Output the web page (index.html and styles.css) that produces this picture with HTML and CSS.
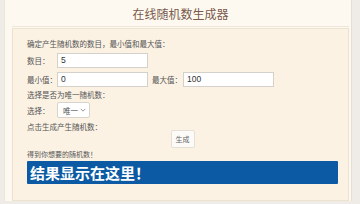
FILE: index.html
```html
<!DOCTYPE html>
<html lang="zh-CN">
<head>
<meta charset="utf-8">
<title>在线随机数生成器</title>
<link rel="stylesheet" href="styles.css">
</head>
<body>
<div class="page">
  <div class="frame">
    <h1 class="title">在线随机数生成器</h1>
    <div class="panel">
      <p class="text">确定产生随机数的数目，最小值和最大值：</p>
      <div class="row">
        <span class="label">数目：</span>
        <input class="field" type="text" value="5">
      </div>
      <div class="row row-gap">
        <span class="label">最小值：</span>
        <input class="field" type="text" value="0">
        <span class="label label-max">最大值：</span>
        <input class="field" type="text" value="100">
      </div>
      <p class="text">选择是否为唯一随机数：</p>
      <div class="row row-select">
        <span class="label">选择：</span>
        <span class="select">唯一<svg class="chev" viewBox="0 0 8 5" width="6" height="4"><path d="M1 1l3 3 3-3" fill="none" stroke="#777" stroke-width="1"/></svg></span>
      </div>
      <p class="text text-tight">点击生成产生随机数：</p>
      <div class="btn-row"><button class="btn">生成</button></div>
      <p class="text small">得到你想要的随机数！</p>
      <div class="result">结果显示在这里！</div>
    </div>
  </div>
</div>
</body>
</html>
```
FILE: styles.css
```css
* { box-sizing: border-box; }
html, body { margin: 0; padding: 0; }
body {
  width: 360px;
  height: 204px;
  overflow: hidden;
  background: #efece7;
  font-family: "Liberation Sans", "Noto Sans CJK SC", sans-serif;
}
.page {
  height: 204px;
  padding-left: 4px;
  padding-right: 8px;
}
.frame {
  height: 201px;
  background: #fdf9f1;
  border-left: 1px solid #ebe6dc;
  border-right: 1px solid #e4dfd6;
  padding: 0 2px 0 7px;
  display: flex;
  flex-direction: column;
}
.title {
  margin: 0;
  height: 27px;
  line-height: 27px;
  text-align: center;
  font-size: 12px;
  font-weight: normal;
  color: #7a5a4b;
  font-family: "Noto Sans CJK SC", sans-serif;
  border-bottom: 1px solid #eee6d8;
}
.panel {
  flex: 1;
  margin-top: 1px;
  background: #fbf2e4;
  border: 1px solid #ede2cf;
  padding: 8px 10px 0 14px;
  color: #555;
  font-size: 7.5px;
}
.text {
  margin: 0;
  height: 14px;
  line-height: 14px;
  font-family: "Noto Sans CJK SC", sans-serif;
}
.text-tight {
  margin-top: 4px;
  height: 10px;
  line-height: 10px;
}
.small { font-size: 7px; height: 12px; line-height: 12px; }
.row {
  display: flex;
  align-items: center;
  height: 18px;
}
.row-gap { margin-top: 1px; }
.row-select { height: 16px; margin-top: 0; }
.label {
  width: 30px;
  font-family: "Noto Sans CJK SC", sans-serif;
}
.label-max { width: 31px; margin-left: 4px; }
.field {
  width: 91px;
  height: 15px;
  border: 1px solid #d4d0ca;
  background: #fff;
  font-family: "Liberation Sans", sans-serif;
  font-size: 8.5px;
  color: #333;
  padding: 0 3px;
  margin: 0;
  outline: none;
}
.select {
  width: 33px;
  height: 16px;
  border: 1px solid #d8d4cd;
  background: #fff;
  border-radius: 2px;
  display: flex;
  align-items: center;
  justify-content: space-between;
  padding: 0 3px 0 5px;
  font-family: "Noto Sans CJK SC", sans-serif;
  color: #555;
}
.btn-row {
  display: flex;
  justify-content: center;
  height: 18px;
  margin-top: -2px;
  align-items: center;
}
.btn {
  width: 24px;
  height: 18px;
  padding: 0;
  border: 1px solid #e4e0d8;
  background: #fdfbf8;
  font-family: "Noto Sans CJK SC", sans-serif;
  font-size: 7px;
  color: #666;
  border-radius: 2px;
}
.result {
  margin-top: 1px;
  height: 23px;
  background: #0b5aa3;
  color: #fff;
  font-family: "Noto Sans CJK SC", sans-serif;
  font-weight: bold;
  font-size: 15px;
  line-height: 23px;
  padding-left: 3px;
  border-radius: 1px;
}
```
